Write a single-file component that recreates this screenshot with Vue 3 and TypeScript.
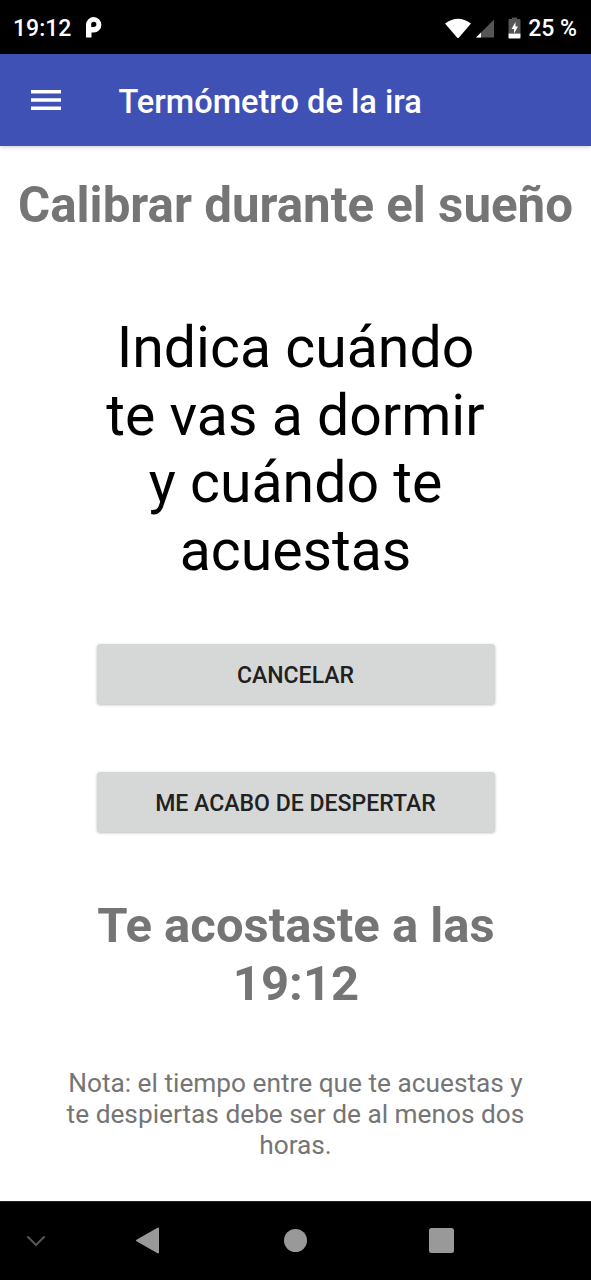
<script setup lang="ts">
const title = 'Termómetro de la ira'
const instructions = ['Indica cuándo', 'te vas a dormir', 'y cuándo te', 'acuestas']
const note = ['Nota: el tiempo entre que te acuestas y', 'te despiertas debe ser de al menos dos', 'horas.']
</script>

<template>
  <div class="screen">
    <header class="status">
      <span class="clock">19:12</span>
      <svg class="app-mark" width="18" height="24" viewBox="0 0 18 24"><path fill="#fff" fill-rule="evenodd" d="M0 21.500V8.500A7.700 7.700 0 1 1 7.700 16.500H5.500V21.500ZM5.200 11H7.800A2.600 2.600 0 1 0 5.200 8.500Z" /></svg>
      <svg class="signals" width="82" height="26" viewBox="0 0 82 26">
        <path fill="#fff" d="M2 8.500Q15 -1 28 8.500L16 22.500Q15 23.500 14 22.500Z" />
        <path fill="#555" d="M51 4.500V22.500H33Z" />
        <path fill="#fff" d="M38 17.500V22.500H33Z" />
        <path fill="#555" d="M69 4V2.500h5V4h2.500q1 0 1 1V18.500h-12V5q0-1 1-1Z" />
        <path fill="#fff" d="M65.500 18.500h12v4q0 1-1 1h-10q-1 0-1-1Z" />
        <path fill="#fff" d="M72.500 7l-4 7h2.500v4.500l4-7h-2.500Z" />
      </svg>
      <span class="percent">25 %</span>
    </header>
    <nav class="toolbar">
      <svg class="menu" width="30" height="20" viewBox="0 0 30 20"><path fill="#fff" d="M0 0h30v3.500H0zM0 8.300h30v3.500H0zM0 16.500h30v3.500H0z" /></svg>
      <span>{{ title }}</span>
    </nav>
    <main>
      <h1>Calibrar durante el sueño</h1>
      <p class="instructions"><span v-for="line in instructions" :key="line">{{ line }}</span></p>
      <button>CANCELAR</button>
      <button class="awake">ME ACABO DE DESPERTAR</button>
      <h2><span>Te acostaste a las</span><span>19:12</span></h2>
      <p class="note"><span v-for="line in note" :key="line">{{ line }}</span></p>
    </main>
    <footer>
      <svg width="591" height="79" viewBox="0 0 591 79">
        <path d="M0 .5H591" stroke="#222" />
        <path d="M28 36l8 8 8-8" fill="none" stroke="#555" stroke-width="2" stroke-linecap="round" />
        <path d="M137 39.500L158 27.500V51.500Z" fill="#999" stroke="#999" stroke-width="2" stroke-linejoin="round" />
        <circle cx="295.500" cy="39.500" r="11.500" fill="#999" />
        <rect x="429" y="27" width="25" height="25" rx="2.500" fill="#999" />
      </svg>
    </footer>
  </div>
</template>

<style scoped>
.screen { width: 591px; height: 1280px; display: flex; flex-direction: column; background: #fff; font-family: Roboto, sans-serif; overflow: hidden; }
.status { height: 54px; box-sizing: border-box; background: #000; color: #fff; display: flex; align-items: center; padding: 2px 14px 0 13px; font-size: 23px; font-weight: 500; }
.app-mark { margin-left: 15px; }
.signals { margin-left: auto; margin-right: 3px; }
.toolbar { height: 92px; background: #3f51b5; color: #fff; display: flex; align-items: center; padding-left: 31px; font-size: 32.600px; font-weight: 500; box-shadow: 0 1px 4px #0003; }
.toolbar span { margin-left: 57.500px; padding-top: 3px; }
main { flex: 1; display: flex; flex-direction: column; align-items: center; text-align: center; }
h1, h2, p { margin: 0; white-space: nowrap; }
h1, h2 { color: #757575; font-size: 49px; line-height: 58px; font-weight: 700; }
h1 { margin-top: 30px; font-size: 49.250px; }
span { display: block; }
.instructions { color: #000; font-size: 57.200px; line-height: 67.500px; margin-top: 80px; }
button { width: 398px; height: 60px; margin: 60px 0 0; padding: 2px 0 0; flex: none; border: 0; border-radius: 3px; background: #d6d8d7; color: #212121; font: 500 23.050px Roboto, sans-serif; box-shadow: 0 1px 3px #0004; }
.awake { margin-top: 68px; }
h2 { margin: 65px 0 0 1px; }
.note { color: #757575; font-size: 26.250px; line-height: 31px; margin-top: 55px; }
footer { height: 79px; background: #000; }
footer svg { display: block; }
</style>

<style>
html, body { margin: 0; background: #fff; }
</style>
